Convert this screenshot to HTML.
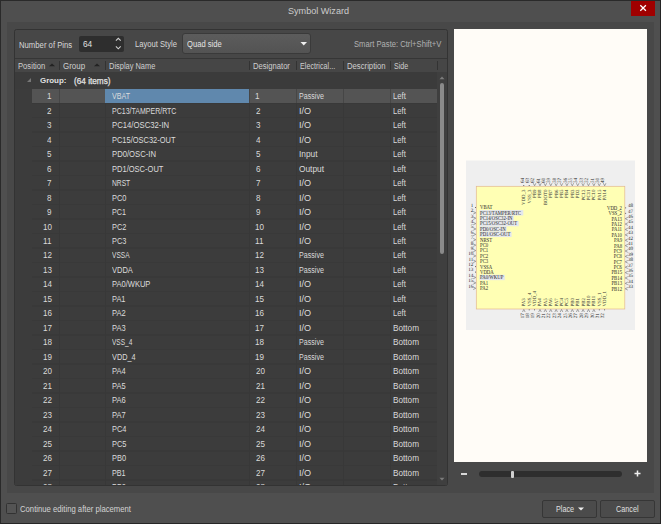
<!DOCTYPE html><html><head><meta charset="utf-8"><style>
*{box-sizing:border-box}
body{margin:0;width:662px;height:524px;overflow:hidden;background:#4f4f4f;position:relative;font-family:"Liberation Sans",sans-serif;color:#dcdcdc}
.a{position:absolute}
.t{position:absolute;white-space:nowrap;font-size:8.5px;line-height:10px;transform-origin:0 50%}
</style></head><body>
<div class="a" style="left:0;top:0;width:662px;height:1px;background:#2a2a2a"></div>
<div class="a" style="left:0;top:0;width:1px;height:524px;background:#2a2a2a"></div>
<div class="a" style="left:660px;top:0;width:1px;height:524px;background:#242424"></div>
<div class="a" style="left:661px;top:0;width:1px;height:524px;background:#ffffff"></div>
<div class="a" style="left:0;top:523px;width:660px;height:1px;background:#262626"></div>
<div class="t" style="left:287.90px;top:4.5px;color:#cccccc;font-size:9px;line-height:12px;transform:scaleX(1.008)">Symbol Wizard</div>
<div class="a" style="left:631px;top:1px;width:24px;height:15px;background:#a00000"></div>
<svg class="a" style="left:631px;top:1px" width="24" height="15"><path d="M9.3 4.2 L14.9 9.8 M14.9 4.2 L9.3 9.8" stroke="#fff" stroke-width="1.25"/></svg>
<div class="a" style="left:7px;top:22px;width:647px;height:471px;background:#484848"></div>
<div class="a" style="left:14px;top:29px;width:434px;height:457px;background:#474747;border:1px solid #333;border-radius:2.5px"></div>
<div class="t" style="left:19.36px;top:39.6px;color:#d8d8d8;transform:scaleX(0.908)">Number of Pins</div>
<div class="a" style="left:79px;top:36px;width:45px;height:16px;background:#2e2e2e;border-radius:2px"></div>
<div class="t" style="left:82.71px;top:39.2px;color:#e0e0e0;transform:scaleX(0.977)">64</div>
<svg class="a" style="left:114px;top:36px" width="9" height="15"><path d="M1.9 4.7 L4.3 2.3 L6.7 4.7 M1.9 10.4 L4.3 12.8 L6.7 10.4" stroke="#d0d0d0" stroke-width="1.1" fill="none"/></svg>
<div class="t" style="left:134.77px;top:39.4px;color:#d8d8d8;transform:scaleX(0.897)">Layout Style</div>
<div class="a" style="left:182px;top:33px;width:128.5px;height:20.5px;background:linear-gradient(#5c5c5c,#535353);border:1px solid #3a3a3a;border-radius:3px"></div>
<div class="t" style="left:186.64px;top:38.8px;color:#e4e4e4;transform:scaleX(0.895)">Quad side</div>
<svg class="a" style="left:300px;top:41px" width="8" height="5"><path d="M0.5 1 L7 1 L3.75 4.4 Z" fill="#f0f0f0"/></svg>
<div class="t" style="left:354.04px;top:39.2px;color:#b2b2b2;transform:scaleX(0.898)">Smart Paste: Ctrl+Shift+V</div>
<div class="a" style="left:15px;top:58px;width:432px;height:1px;background:#363636"></div>
<div class="a" style="left:15px;top:59px;width:432px;height:13px;background:#464646"></div>
<div class="t" style="left:18.17px;top:60.9px;color:#cfcfcf;transform:scaleX(0.900)">Position</div>
<div class="t" style="left:63.13px;top:60.9px;color:#cfcfcf;transform:scaleX(0.934)">Group</div>
<div class="t" style="left:109.39px;top:60.9px;color:#cfcfcf;transform:scaleX(0.876)">Display Name</div>
<div class="t" style="left:253.17px;top:60.9px;color:#cfcfcf;transform:scaleX(0.898)">Designator</div>
<div class="t" style="left:299.81px;top:60.9px;color:#cfcfcf;transform:scaleX(0.845)">Electrical...</div>
<div class="t" style="left:346.86px;top:60.9px;color:#cfcfcf;transform:scaleX(0.908)">Description</div>
<div class="t" style="left:394.17px;top:60.9px;color:#cfcfcf;transform:scaleX(0.833)">Side</div>
<div class="a" style="left:58.5px;top:61px;width:1px;height:9px;background:#333"></div>
<div class="a" style="left:104.5px;top:61px;width:1px;height:9px;background:#333"></div>
<div class="a" style="left:249px;top:61px;width:1px;height:9px;background:#333"></div>
<div class="a" style="left:296px;top:61px;width:1px;height:9px;background:#333"></div>
<div class="a" style="left:343px;top:61px;width:1px;height:9px;background:#333"></div>
<div class="a" style="left:390px;top:61px;width:1px;height:9px;background:#333"></div>
<div class="a" style="left:437px;top:61px;width:1px;height:9px;background:#333"></div>
<svg class="a" style="left:48.8px;top:63px" width="6" height="4"><path d="M0 3.2 L3 0.5 L6 3.2 Z" fill="#222"/></svg>
<svg class="a" style="left:94.3px;top:63px" width="6" height="4"><path d="M0 3.2 L3 0.5 L6 3.2 Z" fill="#222"/></svg>
<div class="a" style="left:15px;top:72px;width:422px;height:16.5px;background:#3b3b3b"></div>
<svg class="a" style="left:26px;top:77px" width="6" height="6"><path d="M5 1 L5 5 L1 5 Z" fill="#777"/></svg>
<div class="t" style="left:40.30px;top:75.6px;color:#e0e0e0;font-size:8px;line-height:10px;font-weight:700;transform:scaleX(0.992)">Group:</div>
<div class="t" style="left:73.52px;top:75.8px;color:#e4e4e4;-webkit-text-stroke:0.25px currentColor;transform:scaleX(0.967)">(64 items)</div>
<div class="a" style="left:15px;top:88.5px;width:422px;height:396.5px;background:#3c3c3c;overflow:hidden">
<div class="a" style="left:17px;top:13.89px;width:405px;height:1.6px;background:#393939"></div>
<div class="a" style="left:17px;top:28.38px;width:405px;height:1.6px;background:#393939"></div>
<div class="a" style="left:17px;top:42.87px;width:405px;height:1.6px;background:#393939"></div>
<div class="a" style="left:17px;top:57.36px;width:405px;height:1.6px;background:#393939"></div>
<div class="a" style="left:17px;top:71.85px;width:405px;height:1.6px;background:#393939"></div>
<div class="a" style="left:17px;top:86.34px;width:405px;height:1.6px;background:#393939"></div>
<div class="a" style="left:17px;top:100.83px;width:405px;height:1.6px;background:#393939"></div>
<div class="a" style="left:17px;top:115.32px;width:405px;height:1.6px;background:#393939"></div>
<div class="a" style="left:17px;top:129.81px;width:405px;height:1.6px;background:#393939"></div>
<div class="a" style="left:17px;top:144.30px;width:405px;height:1.6px;background:#393939"></div>
<div class="a" style="left:17px;top:158.79px;width:405px;height:1.6px;background:#393939"></div>
<div class="a" style="left:17px;top:173.28px;width:405px;height:1.6px;background:#393939"></div>
<div class="a" style="left:17px;top:187.77px;width:405px;height:1.6px;background:#393939"></div>
<div class="a" style="left:17px;top:202.26px;width:405px;height:1.6px;background:#393939"></div>
<div class="a" style="left:17px;top:216.75px;width:405px;height:1.6px;background:#393939"></div>
<div class="a" style="left:17px;top:231.24px;width:405px;height:1.6px;background:#393939"></div>
<div class="a" style="left:17px;top:245.73px;width:405px;height:1.6px;background:#393939"></div>
<div class="a" style="left:17px;top:260.22px;width:405px;height:1.6px;background:#393939"></div>
<div class="a" style="left:17px;top:274.71px;width:405px;height:1.6px;background:#393939"></div>
<div class="a" style="left:17px;top:289.20px;width:405px;height:1.6px;background:#393939"></div>
<div class="a" style="left:17px;top:303.69px;width:405px;height:1.6px;background:#393939"></div>
<div class="a" style="left:17px;top:318.18px;width:405px;height:1.6px;background:#393939"></div>
<div class="a" style="left:17px;top:332.67px;width:405px;height:1.6px;background:#393939"></div>
<div class="a" style="left:17px;top:347.16px;width:405px;height:1.6px;background:#393939"></div>
<div class="a" style="left:17px;top:361.65px;width:405px;height:1.6px;background:#393939"></div>
<div class="a" style="left:17px;top:376.14px;width:405px;height:1.6px;background:#393939"></div>
<div class="a" style="left:17px;top:390.63px;width:405px;height:1.6px;background:#393939"></div>
<div class="a" style="left:17px;top:405.12px;width:405px;height:1.6px;background:#393939"></div>
<div class="a" style="left:44px;top:0;width:1px;height:396px;background:#383838"></div>
<div class="a" style="left:90px;top:0;width:1px;height:396px;background:#383838"></div>
<div class="a" style="left:234px;top:0;width:1px;height:396px;background:#383838"></div>
<div class="a" style="left:281px;top:0;width:1px;height:396px;background:#383838"></div>
<div class="a" style="left:328px;top:0;width:1px;height:396px;background:#383838"></div>
<div class="a" style="left:375px;top:0;width:1px;height:396px;background:#383838"></div>
<div class="a" style="left:17px;top:0.5px;width:405px;height:14px;background:#545454"></div>
<div class="a" style="left:44px;top:0.5px;width:1px;height:14px;background:#464646"></div>
<div class="a" style="left:90px;top:0.5px;width:1px;height:14px;background:#464646"></div>
<div class="a" style="left:234px;top:0.5px;width:1px;height:14px;background:#464646"></div>
<div class="a" style="left:281px;top:0.5px;width:1px;height:14px;background:#464646"></div>
<div class="a" style="left:328px;top:0.5px;width:1px;height:14px;background:#464646"></div>
<div class="a" style="left:375px;top:0.5px;width:1px;height:14px;background:#464646"></div>
<div class="a" style="left:90px;top:0.5px;width:144px;height:14px;background:#6088ad"></div>
<div class="t" style="left:32.21px;top:2.6px;color:#dadada;transform:scaleX(0.950)">1</div>
<div class="t" style="left:97.40px;top:2.6px;color:#dcdcdc;transform:scaleX(0.836)">VBAT</div>
<div class="t" style="left:240.43px;top:2.6px;color:#dadada;transform:scaleX(0.950)">1</div>
<div class="t" style="left:283.81px;top:2.6px;color:#dadada;transform:scaleX(0.836)">Passive</div>
<div class="t" style="left:378.06px;top:2.6px;color:#dadada;transform:scaleX(0.910)">Left</div>
<div class="t" style="left:32.21px;top:17.09px;color:#dadada;transform:scaleX(0.950)">2</div>
<div class="t" style="left:96.82px;top:17.09px;color:#dcdcdc;transform:scaleX(0.825)">PC13/TAMPER/RTC</div>
<div class="t" style="left:240.62px;top:17.09px;color:#dadada;transform:scaleX(0.950)">2</div>
<div class="t" style="left:283.54px;top:17.09px;color:#dadada;transform:scaleX(1.069)">I/O</div>
<div class="t" style="left:378.06px;top:17.09px;color:#dadada;transform:scaleX(0.910)">Left</div>
<div class="t" style="left:32.12px;top:31.580000000000002px;color:#dadada;transform:scaleX(0.950)">3</div>
<div class="t" style="left:96.76px;top:31.580000000000002px;color:#dcdcdc;transform:scaleX(0.909)">PC14/OSC32-IN</div>
<div class="t" style="left:240.72px;top:31.580000000000002px;color:#dadada;transform:scaleX(0.950)">3</div>
<div class="t" style="left:283.54px;top:31.580000000000002px;color:#dadada;transform:scaleX(1.069)">I/O</div>
<div class="t" style="left:378.06px;top:31.580000000000002px;color:#dadada;transform:scaleX(0.910)">Left</div>
<div class="t" style="left:32.02px;top:46.07px;color:#dadada;transform:scaleX(0.950)">4</div>
<div class="t" style="left:96.79px;top:46.07px;color:#dcdcdc;transform:scaleX(0.878)">PC15/OSC32-OUT</div>
<div class="t" style="left:240.81px;top:46.07px;color:#dadada;transform:scaleX(0.950)">4</div>
<div class="t" style="left:283.54px;top:46.07px;color:#dadada;transform:scaleX(1.069)">I/O</div>
<div class="t" style="left:378.06px;top:46.07px;color:#dadada;transform:scaleX(0.910)">Left</div>
<div class="t" style="left:32.12px;top:60.56px;color:#dadada;transform:scaleX(0.950)">5</div>
<div class="t" style="left:96.77px;top:60.56px;color:#dcdcdc;transform:scaleX(0.905)">PD0/OSC-IN</div>
<div class="t" style="left:240.72px;top:60.56px;color:#dadada;transform:scaleX(0.950)">5</div>
<div class="t" style="left:283.62px;top:60.56px;color:#dadada;transform:scaleX(0.978)">Input</div>
<div class="t" style="left:378.06px;top:60.56px;color:#dadada;transform:scaleX(0.910)">Left</div>
<div class="t" style="left:32.12px;top:75.05px;color:#dadada;transform:scaleX(0.950)">6</div>
<div class="t" style="left:96.78px;top:75.05px;color:#dcdcdc;transform:scaleX(0.885)">PD1/OSC-OUT</div>
<div class="t" style="left:240.62px;top:75.05px;color:#dadada;transform:scaleX(0.950)">6</div>
<div class="t" style="left:284.01px;top:75.05px;color:#dadada;transform:scaleX(0.980)">Output</div>
<div class="t" style="left:378.06px;top:75.05px;color:#dadada;transform:scaleX(0.910)">Left</div>
<div class="t" style="left:32.21px;top:89.53999999999999px;color:#dadada;transform:scaleX(0.950)">7</div>
<div class="t" style="left:96.85px;top:89.53999999999999px;color:#dcdcdc;transform:scaleX(0.785)">NRST</div>
<div class="t" style="left:240.62px;top:89.53999999999999px;color:#dadada;transform:scaleX(0.950)">7</div>
<div class="t" style="left:283.54px;top:89.53999999999999px;color:#dadada;transform:scaleX(1.069)">I/O</div>
<div class="t" style="left:378.06px;top:89.53999999999999px;color:#dadada;transform:scaleX(0.910)">Left</div>
<div class="t" style="left:32.12px;top:104.03px;color:#dadada;transform:scaleX(0.950)">8</div>
<div class="t" style="left:96.79px;top:104.03px;color:#dcdcdc;transform:scaleX(0.877)">PC0</div>
<div class="t" style="left:240.62px;top:104.03px;color:#dadada;transform:scaleX(0.950)">8</div>
<div class="t" style="left:283.54px;top:104.03px;color:#dadada;transform:scaleX(1.069)">I/O</div>
<div class="t" style="left:378.06px;top:104.03px;color:#dadada;transform:scaleX(0.910)">Left</div>
<div class="t" style="left:32.21px;top:118.52px;color:#dadada;transform:scaleX(0.950)">9</div>
<div class="t" style="left:96.81px;top:118.52px;color:#dcdcdc;transform:scaleX(0.844)">PC1</div>
<div class="t" style="left:240.62px;top:118.52px;color:#dadada;transform:scaleX(0.950)">9</div>
<div class="t" style="left:283.54px;top:118.52px;color:#dadada;transform:scaleX(1.069)">I/O</div>
<div class="t" style="left:378.06px;top:118.52px;color:#dadada;transform:scaleX(0.910)">Left</div>
<div class="t" style="left:27.65px;top:133.01px;color:#dadada;transform:scaleX(0.950)">10</div>
<div class="t" style="left:96.79px;top:133.01px;color:#dcdcdc;transform:scaleX(0.870)">PC2</div>
<div class="t" style="left:240.43px;top:133.01px;color:#dadada;transform:scaleX(0.950)">10</div>
<div class="t" style="left:283.54px;top:133.01px;color:#dadada;transform:scaleX(1.069)">I/O</div>
<div class="t" style="left:378.06px;top:133.01px;color:#dadada;transform:scaleX(0.910)">Left</div>
<div class="t" style="left:28.32px;top:147.5px;color:#dadada;transform:scaleX(0.950)">11</div>
<div class="t" style="left:96.79px;top:147.5px;color:#dcdcdc;transform:scaleX(0.865)">PC3</div>
<div class="t" style="left:240.43px;top:147.5px;color:#dadada;transform:scaleX(0.950)">11</div>
<div class="t" style="left:283.54px;top:147.5px;color:#dadada;transform:scaleX(1.069)">I/O</div>
<div class="t" style="left:378.06px;top:147.5px;color:#dadada;transform:scaleX(0.910)">Left</div>
<div class="t" style="left:27.75px;top:161.99px;color:#dadada;transform:scaleX(0.950)">12</div>
<div class="t" style="left:97.40px;top:161.99px;color:#dcdcdc;transform:scaleX(0.774)">VSSA</div>
<div class="t" style="left:240.43px;top:161.99px;color:#dadada;transform:scaleX(0.950)">12</div>
<div class="t" style="left:283.81px;top:161.99px;color:#dadada;transform:scaleX(0.836)">Passive</div>
<div class="t" style="left:378.06px;top:161.99px;color:#dadada;transform:scaleX(0.910)">Left</div>
<div class="t" style="left:27.65px;top:176.48px;color:#dadada;transform:scaleX(0.950)">13</div>
<div class="t" style="left:97.40px;top:176.48px;color:#dcdcdc;transform:scaleX(0.881)">VDDA</div>
<div class="t" style="left:240.43px;top:176.48px;color:#dadada;transform:scaleX(0.950)">13</div>
<div class="t" style="left:283.81px;top:176.48px;color:#dadada;transform:scaleX(0.836)">Passive</div>
<div class="t" style="left:378.06px;top:176.48px;color:#dadada;transform:scaleX(0.910)">Left</div>
<div class="t" style="left:27.56px;top:190.97px;color:#dadada;transform:scaleX(0.950)">14</div>
<div class="t" style="left:96.78px;top:190.97px;color:#dcdcdc;transform:scaleX(0.886)">PA0/WKUP</div>
<div class="t" style="left:240.43px;top:190.97px;color:#dadada;transform:scaleX(0.950)">14</div>
<div class="t" style="left:283.54px;top:190.97px;color:#dadada;transform:scaleX(1.069)">I/O</div>
<div class="t" style="left:378.06px;top:190.97px;color:#dadada;transform:scaleX(0.910)">Left</div>
<div class="t" style="left:27.65px;top:205.46px;color:#dadada;transform:scaleX(0.950)">15</div>
<div class="t" style="left:96.79px;top:205.46px;color:#dcdcdc;transform:scaleX(0.874)">PA1</div>
<div class="t" style="left:240.43px;top:205.46px;color:#dadada;transform:scaleX(0.950)">15</div>
<div class="t" style="left:283.54px;top:205.46px;color:#dadada;transform:scaleX(1.069)">I/O</div>
<div class="t" style="left:378.06px;top:205.46px;color:#dadada;transform:scaleX(0.910)">Left</div>
<div class="t" style="left:27.65px;top:219.95px;color:#dadada;transform:scaleX(0.950)">16</div>
<div class="t" style="left:96.78px;top:219.95px;color:#dcdcdc;transform:scaleX(0.888)">PA2</div>
<div class="t" style="left:240.43px;top:219.95px;color:#dadada;transform:scaleX(0.950)">16</div>
<div class="t" style="left:283.54px;top:219.95px;color:#dadada;transform:scaleX(1.069)">I/O</div>
<div class="t" style="left:378.06px;top:219.95px;color:#dadada;transform:scaleX(0.910)">Left</div>
<div class="t" style="left:27.75px;top:234.44px;color:#dadada;transform:scaleX(0.950)">17</div>
<div class="t" style="left:96.78px;top:234.44px;color:#dcdcdc;transform:scaleX(0.882)">PA3</div>
<div class="t" style="left:240.43px;top:234.44px;color:#dadada;transform:scaleX(0.950)">17</div>
<div class="t" style="left:283.54px;top:234.44px;color:#dadada;transform:scaleX(1.069)">I/O</div>
<div class="t" style="left:378.02px;top:234.44px;color:#dadada;transform:scaleX(0.965)">Bottom</div>
<div class="t" style="left:27.65px;top:248.93px;color:#dadada;transform:scaleX(0.950)">18</div>
<div class="t" style="left:97.40px;top:248.93px;color:#dcdcdc;transform:scaleX(0.771)">VSS_4</div>
<div class="t" style="left:240.43px;top:248.93px;color:#dadada;transform:scaleX(0.950)">18</div>
<div class="t" style="left:283.81px;top:248.93px;color:#dadada;transform:scaleX(0.836)">Passive</div>
<div class="t" style="left:378.02px;top:248.93px;color:#dadada;transform:scaleX(0.965)">Bottom</div>
<div class="t" style="left:27.65px;top:263.42px;color:#dadada;transform:scaleX(0.950)">19</div>
<div class="t" style="left:97.40px;top:263.42px;color:#dcdcdc;transform:scaleX(0.860)">VDD_4</div>
<div class="t" style="left:240.43px;top:263.42px;color:#dadada;transform:scaleX(0.950)">19</div>
<div class="t" style="left:283.81px;top:263.42px;color:#dadada;transform:scaleX(0.836)">Passive</div>
<div class="t" style="left:378.02px;top:263.42px;color:#dadada;transform:scaleX(0.965)">Bottom</div>
<div class="t" style="left:27.65px;top:277.91px;color:#dadada;transform:scaleX(0.950)">20</div>
<div class="t" style="left:96.78px;top:277.91px;color:#dcdcdc;transform:scaleX(0.883)">PA4</div>
<div class="t" style="left:240.62px;top:277.91px;color:#dadada;transform:scaleX(0.950)">20</div>
<div class="t" style="left:283.54px;top:277.91px;color:#dadada;transform:scaleX(1.069)">I/O</div>
<div class="t" style="left:378.02px;top:277.91px;color:#dadada;transform:scaleX(0.965)">Bottom</div>
<div class="t" style="left:27.65px;top:292.40000000000003px;color:#dadada;transform:scaleX(0.950)">21</div>
<div class="t" style="left:96.78px;top:292.40000000000003px;color:#dcdcdc;transform:scaleX(0.882)">PA5</div>
<div class="t" style="left:240.62px;top:292.40000000000003px;color:#dadada;transform:scaleX(0.950)">21</div>
<div class="t" style="left:283.54px;top:292.40000000000003px;color:#dadada;transform:scaleX(1.069)">I/O</div>
<div class="t" style="left:378.02px;top:292.40000000000003px;color:#dadada;transform:scaleX(0.965)">Bottom</div>
<div class="t" style="left:27.75px;top:306.89000000000004px;color:#dadada;transform:scaleX(0.950)">22</div>
<div class="t" style="left:96.78px;top:306.89000000000004px;color:#dcdcdc;transform:scaleX(0.889)">PA6</div>
<div class="t" style="left:240.62px;top:306.89000000000004px;color:#dadada;transform:scaleX(0.950)">22</div>
<div class="t" style="left:283.54px;top:306.89000000000004px;color:#dadada;transform:scaleX(1.069)">I/O</div>
<div class="t" style="left:378.02px;top:306.89000000000004px;color:#dadada;transform:scaleX(0.965)">Bottom</div>
<div class="t" style="left:27.65px;top:321.38000000000005px;color:#dadada;transform:scaleX(0.950)">23</div>
<div class="t" style="left:96.78px;top:321.38000000000005px;color:#dcdcdc;transform:scaleX(0.888)">PA7</div>
<div class="t" style="left:240.62px;top:321.38000000000005px;color:#dadada;transform:scaleX(0.950)">23</div>
<div class="t" style="left:283.54px;top:321.38000000000005px;color:#dadada;transform:scaleX(1.069)">I/O</div>
<div class="t" style="left:378.02px;top:321.38000000000005px;color:#dadada;transform:scaleX(0.965)">Bottom</div>
<div class="t" style="left:27.56px;top:335.87px;color:#dadada;transform:scaleX(0.950)">24</div>
<div class="t" style="left:96.79px;top:335.87px;color:#dcdcdc;transform:scaleX(0.872)">PC4</div>
<div class="t" style="left:240.62px;top:335.87px;color:#dadada;transform:scaleX(0.950)">24</div>
<div class="t" style="left:283.54px;top:335.87px;color:#dadada;transform:scaleX(1.069)">I/O</div>
<div class="t" style="left:378.02px;top:335.87px;color:#dadada;transform:scaleX(0.965)">Bottom</div>
<div class="t" style="left:27.65px;top:350.36px;color:#dadada;transform:scaleX(0.950)">25</div>
<div class="t" style="left:96.79px;top:350.36px;color:#dcdcdc;transform:scaleX(0.877)">PC5</div>
<div class="t" style="left:240.62px;top:350.36px;color:#dadada;transform:scaleX(0.950)">25</div>
<div class="t" style="left:283.54px;top:350.36px;color:#dadada;transform:scaleX(1.069)">I/O</div>
<div class="t" style="left:378.02px;top:350.36px;color:#dadada;transform:scaleX(0.965)">Bottom</div>
<div class="t" style="left:27.65px;top:364.85px;color:#dadada;transform:scaleX(0.950)">26</div>
<div class="t" style="left:96.79px;top:364.85px;color:#dcdcdc;transform:scaleX(0.874)">PB0</div>
<div class="t" style="left:240.62px;top:364.85px;color:#dadada;transform:scaleX(0.950)">26</div>
<div class="t" style="left:283.54px;top:364.85px;color:#dadada;transform:scaleX(1.069)">I/O</div>
<div class="t" style="left:378.02px;top:364.85px;color:#dadada;transform:scaleX(0.965)">Bottom</div>
<div class="t" style="left:27.75px;top:379.34000000000003px;color:#dadada;transform:scaleX(0.950)">27</div>
<div class="t" style="left:96.81px;top:379.34000000000003px;color:#dcdcdc;transform:scaleX(0.847)">PB1</div>
<div class="t" style="left:240.62px;top:379.34000000000003px;color:#dadada;transform:scaleX(0.950)">27</div>
<div class="t" style="left:283.54px;top:379.34000000000003px;color:#dadada;transform:scaleX(1.069)">I/O</div>
<div class="t" style="left:378.02px;top:379.34000000000003px;color:#dadada;transform:scaleX(0.965)">Bottom</div>
<div class="t" style="left:27.65px;top:393.83000000000004px;color:#dadada;transform:scaleX(0.950)">28</div>
<div class="t" style="left:96.79px;top:393.83000000000004px;color:#dcdcdc;transform:scaleX(0.867)">PB2</div>
<div class="t" style="left:240.62px;top:393.83000000000004px;color:#dadada;transform:scaleX(0.950)">28</div>
<div class="t" style="left:283.54px;top:393.83000000000004px;color:#dadada;transform:scaleX(1.069)">I/O</div>
<div class="t" style="left:378.02px;top:393.83000000000004px;color:#dadada;transform:scaleX(0.965)">Bottom</div>
</div>
<div class="a" style="left:437px;top:72px;width:10px;height:413px;background:#3f3f3f"></div>
<svg class="a" style="left:439px;top:76px" width="6" height="4"><path d="M0.5 3.2 L3 0.6 L5.5 3.2 Z" fill="#7c7c7c"/></svg>
<div class="a" style="left:440px;top:83px;width:4px;height:170.5px;background:#8a8a8a;border-radius:2px"></div>
<svg class="a" style="left:439px;top:477px" width="6" height="4"><path d="M0.5 0.8 L3 3.4 L5.5 0.8 Z" fill="#7c7c7c"/></svg>
<div class="a" style="left:454px;top:29px;width:193px;height:433px;background:#fffcf7"></div>
<svg class="a" style="left:454px;top:29px" width="194" height="433" viewBox="454 29 194 433" font-family="Liberation Serif" text-rendering="geometricPrecision">
<rect x="466" y="160.5" width="169" height="169.5" fill="#efefef"/>
<rect x="476.3" y="186.3" width="148.5" height="122.7" fill="#ffffb4" stroke="#e4b890" stroke-width="0.7"/>
<rect x="479.3" y="210.09" width="44.0" height="5.39" fill="#e4e6ec"/>
<rect x="479.3" y="215.48" width="34.5" height="5.39" fill="#e4e6ec"/>
<rect x="479.3" y="220.87" width="39.4" height="5.39" fill="#e4e6ec"/>
<rect x="479.3" y="226.26" width="27.4" height="5.39" fill="#e4e6ec"/>
<rect x="479.3" y="231.65" width="32.3" height="5.39" fill="#e4e6ec"/>
<rect x="479.3" y="274.77" width="25.5" height="5.39" fill="#e4e6ec"/>
<text transform="translate(480,209.30) scale(0.97,1.25)" font-size="4.9" fill="#262626">VBAT</text>
<rect x="475" y="207.00" width="0.9" height="0.8" fill="#333"/>
<text x="473.4" y="206.80" font-size="5.1" fill="#262626" text-anchor="end">1</text>
<text transform="translate(480,214.69) scale(0.97,1.25)" font-size="4.9" fill="#262626">PC13/TAMPER/RTC</text>
<path d="M473.2 211.49 L475.8 212.79 L473.2 214.09" stroke="#6e6e6e" stroke-width="0.6" fill="none"/>
<text x="473.4" y="212.19" font-size="5.1" fill="#262626" text-anchor="end">2</text>
<text transform="translate(480,220.08) scale(0.97,1.25)" font-size="4.9" fill="#262626">PC14/OSC32-IN</text>
<path d="M473.2 216.88 L475.8 218.18 L473.2 219.48" stroke="#6e6e6e" stroke-width="0.6" fill="none"/>
<text x="473.4" y="217.58" font-size="5.1" fill="#262626" text-anchor="end">3</text>
<text transform="translate(480,225.47) scale(0.97,1.25)" font-size="4.9" fill="#262626">PC15/OSC32-OUT</text>
<path d="M473.2 222.27 L475.8 223.57 L473.2 224.87" stroke="#6e6e6e" stroke-width="0.6" fill="none"/>
<text x="473.4" y="222.97" font-size="5.1" fill="#262626" text-anchor="end">4</text>
<text transform="translate(480,230.86) scale(0.97,1.25)" font-size="4.9" fill="#262626">PD0/OSC-IN</text>
<path d="M473.2 227.66 L475.8 228.96 L473.2 230.26" stroke="#6e6e6e" stroke-width="0.6" fill="none"/>
<text x="473.4" y="228.36" font-size="5.1" fill="#262626" text-anchor="end">5</text>
<text transform="translate(480,236.25) scale(0.97,1.25)" font-size="4.9" fill="#262626">PD1/OSC-OUT</text>
<path d="M473.2 233.05 L475.8 234.35 L473.2 235.65" stroke="#6e6e6e" stroke-width="0.6" fill="none"/>
<text x="473.4" y="233.75" font-size="5.1" fill="#262626" text-anchor="end">6</text>
<text transform="translate(480,241.64) scale(0.97,1.25)" font-size="4.9" fill="#262626">NRST</text>
<path d="M473.2 238.44 L475.8 239.74 L473.2 241.04" stroke="#6e6e6e" stroke-width="0.6" fill="none"/>
<text x="473.4" y="239.14" font-size="5.1" fill="#262626" text-anchor="end">7</text>
<text transform="translate(480,247.03) scale(0.97,1.25)" font-size="4.9" fill="#262626">PC0</text>
<path d="M473.2 243.83 L475.8 245.13 L473.2 246.43" stroke="#6e6e6e" stroke-width="0.6" fill="none"/>
<text x="473.4" y="244.53" font-size="5.1" fill="#262626" text-anchor="end">8</text>
<text transform="translate(480,252.42) scale(0.97,1.25)" font-size="4.9" fill="#262626">PC1</text>
<path d="M473.2 249.22 L475.8 250.52 L473.2 251.82" stroke="#6e6e6e" stroke-width="0.6" fill="none"/>
<text x="473.4" y="249.92" font-size="5.1" fill="#262626" text-anchor="end">9</text>
<text transform="translate(480,257.81) scale(0.97,1.25)" font-size="4.9" fill="#262626">PC2</text>
<path d="M473.2 254.61 L475.8 255.91 L473.2 257.21" stroke="#6e6e6e" stroke-width="0.6" fill="none"/>
<text x="473.4" y="255.31" font-size="5.1" fill="#262626" text-anchor="end">10</text>
<text transform="translate(480,263.20) scale(0.97,1.25)" font-size="4.9" fill="#262626">PC3</text>
<path d="M473.2 260.00 L475.8 261.30 L473.2 262.60" stroke="#6e6e6e" stroke-width="0.6" fill="none"/>
<text x="473.4" y="260.70" font-size="5.1" fill="#262626" text-anchor="end">11</text>
<text transform="translate(480,268.59) scale(0.97,1.25)" font-size="4.9" fill="#262626">VSSA</text>
<rect x="475" y="266.29" width="0.9" height="0.8" fill="#333"/>
<text x="473.4" y="266.09" font-size="5.1" fill="#262626" text-anchor="end">12</text>
<text transform="translate(480,273.98) scale(0.97,1.25)" font-size="4.9" fill="#262626">VDDA</text>
<rect x="475" y="271.68" width="0.9" height="0.8" fill="#333"/>
<text x="473.4" y="271.48" font-size="5.1" fill="#262626" text-anchor="end">13</text>
<text transform="translate(480,279.37) scale(0.97,1.25)" font-size="4.9" fill="#262626">PA0/WKUP</text>
<path d="M473.2 276.17 L475.8 277.47 L473.2 278.77" stroke="#6e6e6e" stroke-width="0.6" fill="none"/>
<text x="473.4" y="276.87" font-size="5.1" fill="#262626" text-anchor="end">14</text>
<text transform="translate(480,284.76) scale(0.97,1.25)" font-size="4.9" fill="#262626">PA1</text>
<path d="M473.2 281.56 L475.8 282.86 L473.2 284.16" stroke="#6e6e6e" stroke-width="0.6" fill="none"/>
<text x="473.4" y="282.26" font-size="5.1" fill="#262626" text-anchor="end">15</text>
<text transform="translate(480,290.15) scale(0.97,1.25)" font-size="4.9" fill="#262626">PA2</text>
<path d="M473.2 286.95 L475.8 288.25 L473.2 289.55" stroke="#6e6e6e" stroke-width="0.6" fill="none"/>
<text x="473.4" y="287.65" font-size="5.1" fill="#262626" text-anchor="end">16</text>
<text transform="translate(622,209.80) scale(0.97,1.25)" font-size="4.9" fill="#262626" text-anchor="end">VDD_2</text>
<rect x="625.2" y="207.50" width="0.9" height="0.8" fill="#333"/>
<text x="628" y="207.30" font-size="5.1" fill="#262626">48</text>
<text transform="translate(622,215.19) scale(0.97,1.25)" font-size="4.9" fill="#262626" text-anchor="end">VSS_2</text>
<rect x="625.2" y="212.89" width="0.9" height="0.8" fill="#333"/>
<text x="628" y="212.69" font-size="5.1" fill="#262626">47</text>
<text transform="translate(622,220.58) scale(0.97,1.25)" font-size="4.9" fill="#262626" text-anchor="end">PA13</text>
<path d="M627.8 217.38 L625.2 218.68 L627.8 219.98" stroke="#6e6e6e" stroke-width="0.6" fill="none"/>
<text x="628" y="218.08" font-size="5.1" fill="#262626">46</text>
<text transform="translate(622,225.97) scale(0.97,1.25)" font-size="4.9" fill="#262626" text-anchor="end">PA12</text>
<path d="M627.8 222.77 L625.2 224.07 L627.8 225.37" stroke="#6e6e6e" stroke-width="0.6" fill="none"/>
<text x="628" y="223.47" font-size="5.1" fill="#262626">45</text>
<text transform="translate(622,231.36) scale(0.97,1.25)" font-size="4.9" fill="#262626" text-anchor="end">PA11</text>
<path d="M627.8 228.16 L625.2 229.46 L627.8 230.76" stroke="#6e6e6e" stroke-width="0.6" fill="none"/>
<text x="628" y="228.86" font-size="5.1" fill="#262626">44</text>
<text transform="translate(622,236.75) scale(0.97,1.25)" font-size="4.9" fill="#262626" text-anchor="end">PA10</text>
<path d="M627.8 233.55 L625.2 234.85 L627.8 236.15" stroke="#6e6e6e" stroke-width="0.6" fill="none"/>
<text x="628" y="234.25" font-size="5.1" fill="#262626">43</text>
<text transform="translate(622,242.14) scale(0.97,1.25)" font-size="4.9" fill="#262626" text-anchor="end">PA9</text>
<path d="M627.8 238.94 L625.2 240.24 L627.8 241.54" stroke="#6e6e6e" stroke-width="0.6" fill="none"/>
<text x="628" y="239.64" font-size="5.1" fill="#262626">42</text>
<text transform="translate(622,247.53) scale(0.97,1.25)" font-size="4.9" fill="#262626" text-anchor="end">PA8</text>
<path d="M627.8 244.33 L625.2 245.63 L627.8 246.93" stroke="#6e6e6e" stroke-width="0.6" fill="none"/>
<text x="628" y="245.03" font-size="5.1" fill="#262626">41</text>
<text transform="translate(622,252.92) scale(0.97,1.25)" font-size="4.9" fill="#262626" text-anchor="end">PC9</text>
<path d="M627.8 249.72 L625.2 251.02 L627.8 252.32" stroke="#6e6e6e" stroke-width="0.6" fill="none"/>
<text x="628" y="250.42" font-size="5.1" fill="#262626">40</text>
<text transform="translate(622,258.31) scale(0.97,1.25)" font-size="4.9" fill="#262626" text-anchor="end">PC8</text>
<path d="M627.8 255.11 L625.2 256.41 L627.8 257.71" stroke="#6e6e6e" stroke-width="0.6" fill="none"/>
<text x="628" y="255.81" font-size="5.1" fill="#262626">39</text>
<text transform="translate(622,263.70) scale(0.97,1.25)" font-size="4.9" fill="#262626" text-anchor="end">PC7</text>
<path d="M627.8 260.50 L625.2 261.80 L627.8 263.10" stroke="#6e6e6e" stroke-width="0.6" fill="none"/>
<text x="628" y="261.20" font-size="5.1" fill="#262626">38</text>
<text transform="translate(622,269.09) scale(0.97,1.25)" font-size="4.9" fill="#262626" text-anchor="end">PC6</text>
<path d="M627.8 265.89 L625.2 267.19 L627.8 268.49" stroke="#6e6e6e" stroke-width="0.6" fill="none"/>
<text x="628" y="266.59" font-size="5.1" fill="#262626">37</text>
<text transform="translate(622,274.48) scale(0.97,1.25)" font-size="4.9" fill="#262626" text-anchor="end">PB15</text>
<path d="M627.8 271.28 L625.2 272.58 L627.8 273.88" stroke="#6e6e6e" stroke-width="0.6" fill="none"/>
<text x="628" y="271.98" font-size="5.1" fill="#262626">36</text>
<text transform="translate(622,279.87) scale(0.97,1.25)" font-size="4.9" fill="#262626" text-anchor="end">PB14</text>
<path d="M627.8 276.67 L625.2 277.97 L627.8 279.27" stroke="#6e6e6e" stroke-width="0.6" fill="none"/>
<text x="628" y="277.37" font-size="5.1" fill="#262626">35</text>
<text transform="translate(622,285.26) scale(0.97,1.25)" font-size="4.9" fill="#262626" text-anchor="end">PB13</text>
<path d="M627.8 282.06 L625.2 283.36 L627.8 284.66" stroke="#6e6e6e" stroke-width="0.6" fill="none"/>
<text x="628" y="282.76" font-size="5.1" fill="#262626">34</text>
<text transform="translate(622,290.65) scale(0.97,1.25)" font-size="4.9" fill="#262626" text-anchor="end">PB12</text>
<path d="M627.8 287.45 L625.2 288.75 L627.8 290.05" stroke="#6e6e6e" stroke-width="0.6" fill="none"/>
<text x="628" y="288.15" font-size="5.1" fill="#262626">33</text>
<text transform="translate(525.30,189.5) rotate(-90)" font-size="4.9" fill="#383838" text-anchor="end">VDD_3</text>
<rect x="523.40" y="185" width="0.8" height="0.9" fill="#333"/>
<text transform="translate(523.50,183) rotate(-90)" font-size="5.1" fill="#262626">64</text>
<text transform="translate(530.69,189.5) rotate(-90)" font-size="4.9" fill="#383838" text-anchor="end">VSS_3</text>
<rect x="528.79" y="185" width="0.8" height="0.9" fill="#333"/>
<text transform="translate(528.89,183) rotate(-90)" font-size="5.1" fill="#262626">63</text>
<text transform="translate(536.08,189.5) rotate(-90)" font-size="4.9" fill="#383838" text-anchor="end">PB9</text>
<path d="M533.28 183.2 L534.58 185.8 L535.88 183.2" stroke="#6e6e6e" stroke-width="0.6" fill="none"/>
<text transform="translate(534.28,183) rotate(-90)" font-size="5.1" fill="#262626">62</text>
<text transform="translate(541.47,189.5) rotate(-90)" font-size="4.9" fill="#383838" text-anchor="end">PB8</text>
<path d="M538.67 183.2 L539.97 185.8 L541.27 183.2" stroke="#6e6e6e" stroke-width="0.6" fill="none"/>
<text transform="translate(539.67,183) rotate(-90)" font-size="5.1" fill="#262626">61</text>
<text transform="translate(546.86,189.5) rotate(-90)" font-size="4.9" fill="#383838" text-anchor="end">BOOT0</text>
<path d="M544.06 183.2 L545.36 185.8 L546.66 183.2" stroke="#6e6e6e" stroke-width="0.6" fill="none"/>
<text transform="translate(545.06,183) rotate(-90)" font-size="5.1" fill="#262626">60</text>
<text transform="translate(552.25,189.5) rotate(-90)" font-size="4.9" fill="#383838" text-anchor="end">PB7</text>
<path d="M549.45 183.2 L550.75 185.8 L552.05 183.2" stroke="#6e6e6e" stroke-width="0.6" fill="none"/>
<text transform="translate(550.45,183) rotate(-90)" font-size="5.1" fill="#262626">59</text>
<text transform="translate(557.64,189.5) rotate(-90)" font-size="4.9" fill="#383838" text-anchor="end">PB6</text>
<path d="M554.84 183.2 L556.14 185.8 L557.44 183.2" stroke="#6e6e6e" stroke-width="0.6" fill="none"/>
<text transform="translate(555.84,183) rotate(-90)" font-size="5.1" fill="#262626">58</text>
<text transform="translate(563.03,189.5) rotate(-90)" font-size="4.9" fill="#383838" text-anchor="end">PB5</text>
<path d="M560.23 183.2 L561.53 185.8 L562.83 183.2" stroke="#6e6e6e" stroke-width="0.6" fill="none"/>
<text transform="translate(561.23,183) rotate(-90)" font-size="5.1" fill="#262626">57</text>
<text transform="translate(568.42,189.5) rotate(-90)" font-size="4.9" fill="#383838" text-anchor="end">PB4</text>
<path d="M565.62 183.2 L566.92 185.8 L568.22 183.2" stroke="#6e6e6e" stroke-width="0.6" fill="none"/>
<text transform="translate(566.62,183) rotate(-90)" font-size="5.1" fill="#262626">56</text>
<text transform="translate(573.81,189.5) rotate(-90)" font-size="4.9" fill="#383838" text-anchor="end">PB3</text>
<path d="M571.01 183.2 L572.31 185.8 L573.61 183.2" stroke="#6e6e6e" stroke-width="0.6" fill="none"/>
<text transform="translate(572.01,183) rotate(-90)" font-size="5.1" fill="#262626">55</text>
<text transform="translate(579.20,189.5) rotate(-90)" font-size="4.9" fill="#383838" text-anchor="end">PD2</text>
<path d="M576.40 183.2 L577.70 185.8 L579.00 183.2" stroke="#6e6e6e" stroke-width="0.6" fill="none"/>
<text transform="translate(577.40,183) rotate(-90)" font-size="5.1" fill="#262626">54</text>
<text transform="translate(584.59,189.5) rotate(-90)" font-size="4.9" fill="#383838" text-anchor="end">PC12</text>
<path d="M581.79 183.2 L583.09 185.8 L584.39 183.2" stroke="#6e6e6e" stroke-width="0.6" fill="none"/>
<text transform="translate(582.79,183) rotate(-90)" font-size="5.1" fill="#262626">53</text>
<text transform="translate(589.98,189.5) rotate(-90)" font-size="4.9" fill="#383838" text-anchor="end">PC11</text>
<path d="M587.18 183.2 L588.48 185.8 L589.78 183.2" stroke="#6e6e6e" stroke-width="0.6" fill="none"/>
<text transform="translate(588.18,183) rotate(-90)" font-size="5.1" fill="#262626">52</text>
<text transform="translate(595.37,189.5) rotate(-90)" font-size="4.9" fill="#383838" text-anchor="end">PC10</text>
<path d="M592.57 183.2 L593.87 185.8 L595.17 183.2" stroke="#6e6e6e" stroke-width="0.6" fill="none"/>
<text transform="translate(593.57,183) rotate(-90)" font-size="5.1" fill="#262626">51</text>
<text transform="translate(600.76,189.5) rotate(-90)" font-size="4.9" fill="#383838" text-anchor="end">PA15</text>
<path d="M597.96 183.2 L599.26 185.8 L600.56 183.2" stroke="#6e6e6e" stroke-width="0.6" fill="none"/>
<text transform="translate(598.96,183) rotate(-90)" font-size="5.1" fill="#262626">50</text>
<text transform="translate(606.15,189.5) rotate(-90)" font-size="4.9" fill="#383838" text-anchor="end">PA14</text>
<path d="M603.35 183.2 L604.65 185.8 L605.95 183.2" stroke="#6e6e6e" stroke-width="0.6" fill="none"/>
<text transform="translate(604.35,183) rotate(-90)" font-size="5.1" fill="#262626">49</text>
<text transform="translate(525.30,306.5) rotate(-90)" font-size="4.9" fill="#383838">PA3</text>
<path d="M522.50 312 L523.80 309.4 L525.10 312" stroke="#6e6e6e" stroke-width="0.6" fill="none"/>
<text transform="translate(523.50,318.3) rotate(-90)" font-size="5.1" fill="#262626">17</text>
<text transform="translate(530.69,306.5) rotate(-90)" font-size="4.9" fill="#383838">VSS_4</text>
<rect x="528.79" y="309.4" width="0.8" height="0.9" fill="#333"/>
<text transform="translate(528.89,318.3) rotate(-90)" font-size="5.1" fill="#262626">18</text>
<text transform="translate(536.08,306.5) rotate(-90)" font-size="4.9" fill="#383838">VDD_4</text>
<rect x="534.18" y="309.4" width="0.8" height="0.9" fill="#333"/>
<text transform="translate(534.28,318.3) rotate(-90)" font-size="5.1" fill="#262626">19</text>
<text transform="translate(541.47,306.5) rotate(-90)" font-size="4.9" fill="#383838">PA4</text>
<path d="M538.67 312 L539.97 309.4 L541.27 312" stroke="#6e6e6e" stroke-width="0.6" fill="none"/>
<text transform="translate(539.67,318.3) rotate(-90)" font-size="5.1" fill="#262626">20</text>
<text transform="translate(546.86,306.5) rotate(-90)" font-size="4.9" fill="#383838">PA5</text>
<path d="M544.06 312 L545.36 309.4 L546.66 312" stroke="#6e6e6e" stroke-width="0.6" fill="none"/>
<text transform="translate(545.06,318.3) rotate(-90)" font-size="5.1" fill="#262626">21</text>
<text transform="translate(552.25,306.5) rotate(-90)" font-size="4.9" fill="#383838">PA6</text>
<path d="M549.45 312 L550.75 309.4 L552.05 312" stroke="#6e6e6e" stroke-width="0.6" fill="none"/>
<text transform="translate(550.45,318.3) rotate(-90)" font-size="5.1" fill="#262626">22</text>
<text transform="translate(557.64,306.5) rotate(-90)" font-size="4.9" fill="#383838">PA7</text>
<path d="M554.84 312 L556.14 309.4 L557.44 312" stroke="#6e6e6e" stroke-width="0.6" fill="none"/>
<text transform="translate(555.84,318.3) rotate(-90)" font-size="5.1" fill="#262626">23</text>
<text transform="translate(563.03,306.5) rotate(-90)" font-size="4.9" fill="#383838">PC4</text>
<path d="M560.23 312 L561.53 309.4 L562.83 312" stroke="#6e6e6e" stroke-width="0.6" fill="none"/>
<text transform="translate(561.23,318.3) rotate(-90)" font-size="5.1" fill="#262626">24</text>
<text transform="translate(568.42,306.5) rotate(-90)" font-size="4.9" fill="#383838">PC5</text>
<path d="M565.62 312 L566.92 309.4 L568.22 312" stroke="#6e6e6e" stroke-width="0.6" fill="none"/>
<text transform="translate(566.62,318.3) rotate(-90)" font-size="5.1" fill="#262626">25</text>
<text transform="translate(573.81,306.5) rotate(-90)" font-size="4.9" fill="#383838">PB0</text>
<path d="M571.01 312 L572.31 309.4 L573.61 312" stroke="#6e6e6e" stroke-width="0.6" fill="none"/>
<text transform="translate(572.01,318.3) rotate(-90)" font-size="5.1" fill="#262626">26</text>
<text transform="translate(579.20,306.5) rotate(-90)" font-size="4.9" fill="#383838">PB1</text>
<path d="M576.40 312 L577.70 309.4 L579.00 312" stroke="#6e6e6e" stroke-width="0.6" fill="none"/>
<text transform="translate(577.40,318.3) rotate(-90)" font-size="5.1" fill="#262626">27</text>
<text transform="translate(584.59,306.5) rotate(-90)" font-size="4.9" fill="#383838">PB2</text>
<path d="M581.79 312 L583.09 309.4 L584.39 312" stroke="#6e6e6e" stroke-width="0.6" fill="none"/>
<text transform="translate(582.79,318.3) rotate(-90)" font-size="5.1" fill="#262626">28</text>
<text transform="translate(589.98,306.5) rotate(-90)" font-size="4.9" fill="#383838">PB10</text>
<path d="M587.18 312 L588.48 309.4 L589.78 312" stroke="#6e6e6e" stroke-width="0.6" fill="none"/>
<text transform="translate(588.18,318.3) rotate(-90)" font-size="5.1" fill="#262626">29</text>
<text transform="translate(595.37,306.5) rotate(-90)" font-size="4.9" fill="#383838">PB11</text>
<path d="M592.57 312 L593.87 309.4 L595.17 312" stroke="#6e6e6e" stroke-width="0.6" fill="none"/>
<text transform="translate(593.57,318.3) rotate(-90)" font-size="5.1" fill="#262626">30</text>
<text transform="translate(600.76,306.5) rotate(-90)" font-size="4.9" fill="#383838">VSS_1</text>
<rect x="598.86" y="309.4" width="0.8" height="0.9" fill="#333"/>
<text transform="translate(598.96,318.3) rotate(-90)" font-size="5.1" fill="#262626">31</text>
<text transform="translate(606.15,306.5) rotate(-90)" font-size="4.9" fill="#383838">VDD_1</text>
<rect x="604.25" y="309.4" width="0.8" height="0.9" fill="#333"/>
<text transform="translate(604.35,318.3) rotate(-90)" font-size="5.1" fill="#262626">32</text>
</svg>
<div class="a" style="left:461px;top:473px;width:6px;height:1.5px;background:#d8d8d8"></div>
<div class="a" style="left:479px;top:471px;width:143px;height:6px;background:#2e2e2e;border-radius:3px"></div>
<div class="a" style="left:510.5px;top:470.5px;width:3.5px;height:7px;background:#d0d0d0;border-radius:1px"></div>
<svg class="a" style="left:634px;top:470px" width="7" height="7"><path d="M0.5 3.5 L6.5 3.5 M3.5 0.5 L3.5 6.5" stroke="#f0f0f0" stroke-width="1.5"/></svg>
<div class="a" style="left:6px;top:503px;width:11px;height:10.5px;border:1px solid #323232;background:#545454;border-radius:1.5px"></div>
<div class="t" style="left:19.54px;top:503.7px;color:#d4d4d4;transform:scaleX(0.907)">Continue editing after placement</div>
<div class="a" style="left:542px;top:499.5px;width:55px;height:18px;border:1px solid #363636;background:#4b4b4b;border-radius:2px"></div>
<div class="t" style="left:556.30px;top:503.5px;color:#e0e0e0;transform:scaleX(0.851)">Place</div>
<svg class="a" style="left:578px;top:507px" width="7" height="4"><path d="M0 0.5 L6 0.5 L3 3.5 Z" fill="#f0f0f0"/></svg>
<div class="a" style="left:600px;top:499.5px;width:55px;height:18px;border:1px solid #363636;background:#4b4b4b;border-radius:2px"></div>
<div class="t" style="left:616.16px;top:503.5px;color:#e0e0e0;transform:scaleX(0.851)">Cancel</div>
</body></html>
